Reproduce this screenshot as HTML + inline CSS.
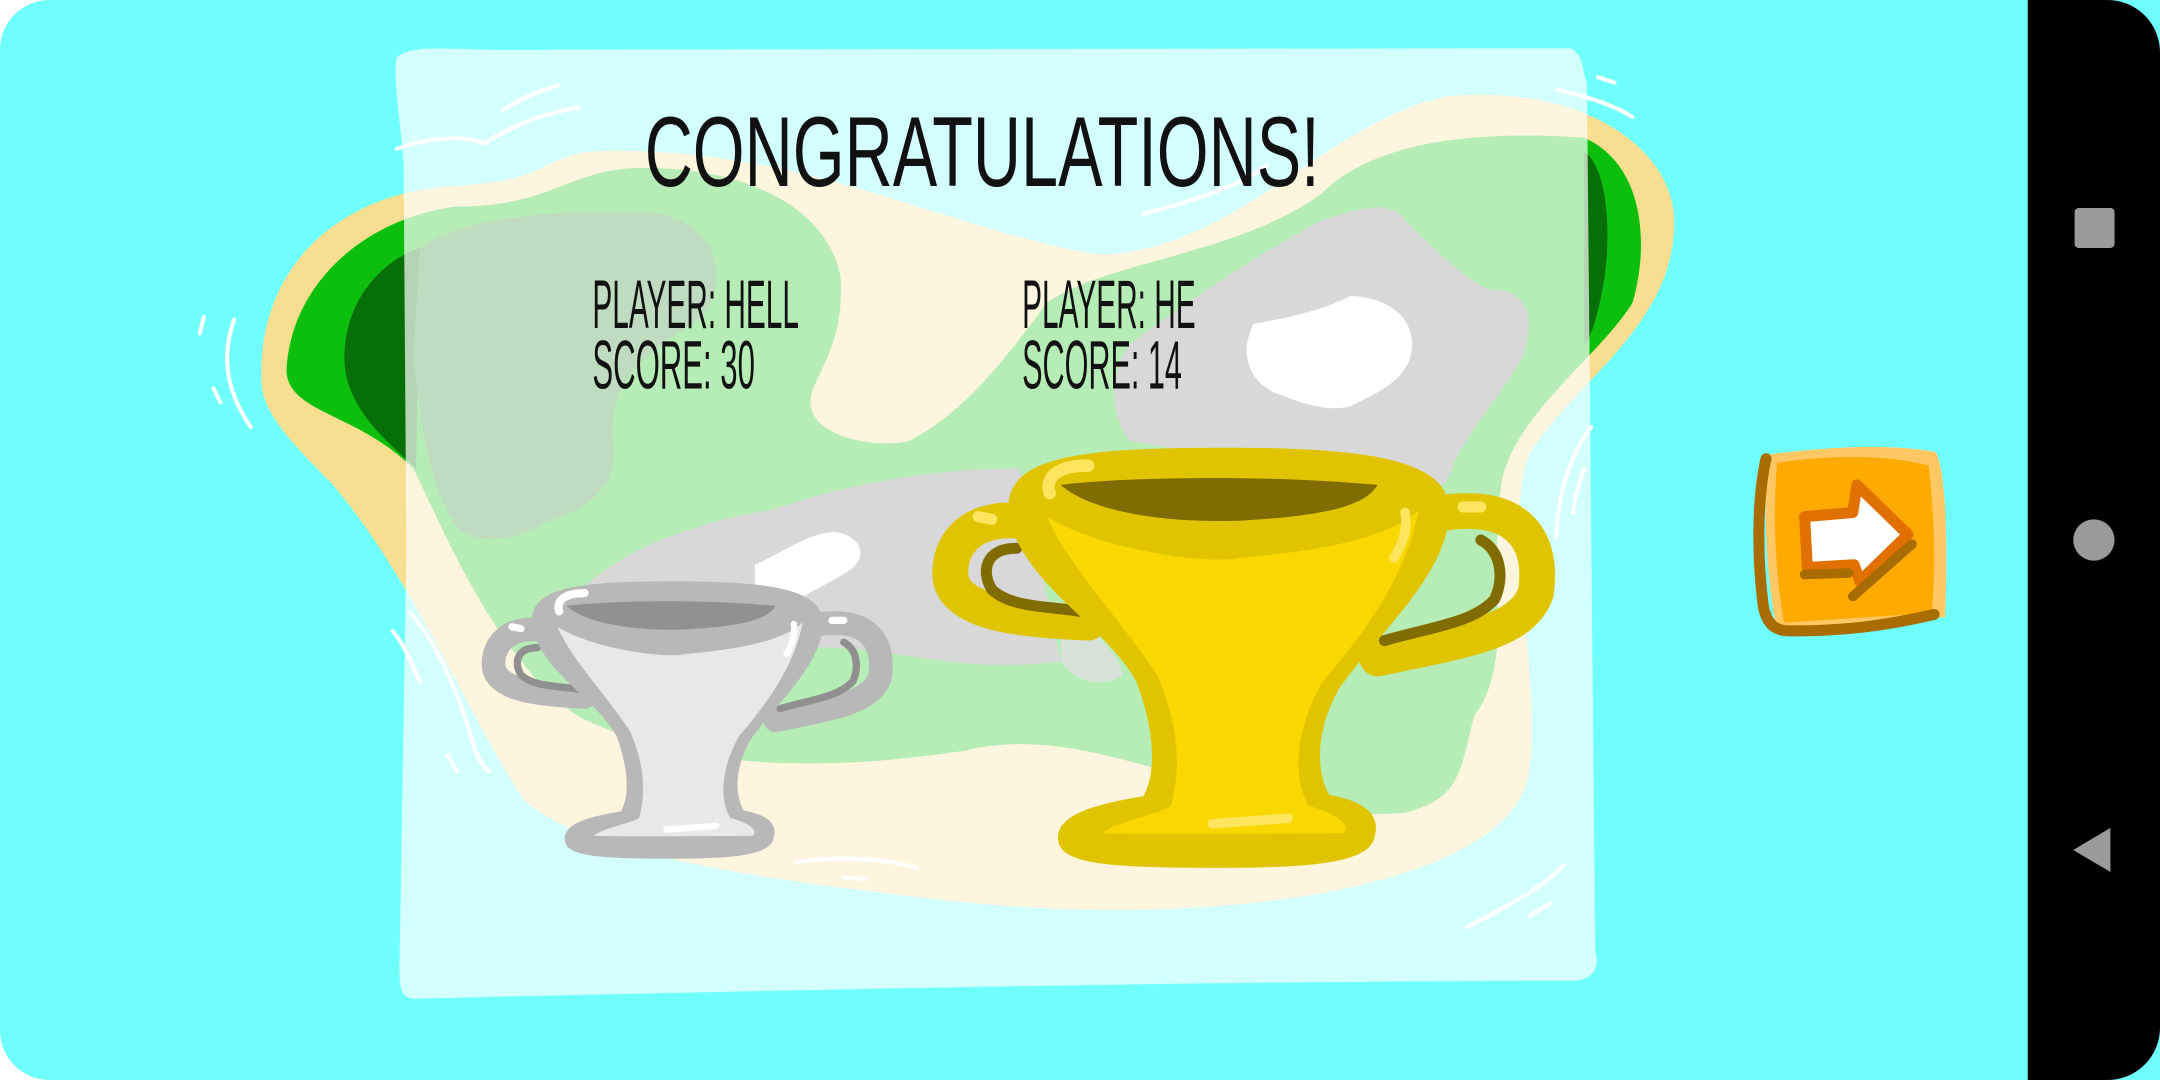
<!DOCTYPE html>
<html><head><meta charset="utf-8"><style>
html,body{margin:0;padding:0;background:#fff;width:2160px;height:1080px;overflow:hidden}
svg{display:block}
</style></head><body>
<svg width="2160" height="1080" viewBox="0 0 1568 784" xmlns="http://www.w3.org/2000/svg">
<path d="M36,0 H1568 V784 H36 A36,36 0 0 1 0,748 V36 A36,36 0 0 1 36,0Z" fill="#6ffffd"/>
<path d="M1472,0 H1530 A38,38 0 0 1 1568,38 V746 A38,38 0 0 1 1530,784 H1472Z" fill="#000"/>
<rect x="1506" y="151" width="29" height="29" rx="3" fill="#9a9a9a"/>
<circle cx="1520" cy="392" r="15" fill="#9a9a9a"/>
<path d="M1505,617 L1532,601 L1532,633Z" fill="#9a9a9a"/>

<!-- island -->
<path d="M190,280 C185,200 240,140 330,135 C420,130 380,105 470,110 C600,115 700,170 800,185 C900,180 960,90 1050,70 C1150,60 1222,110 1215,170 C1210,240 1140,280 1110,330 C1090,380 1120,500 1110,560 C1100,640 900,675 700,655 C560,640 420,620 380,580 C340,520 300,420 240,350 C210,320 192,300 190,280Z" fill="#f8de90"/>
<path d="M208,270 C210,210 260,160 330,150 C400,150 410,125 460,122 C540,120 600,150 610,200 C615,260 580,280 590,300 C600,320 640,325 660,320 C700,300 730,260 760,220 C800,190 900,185 960,140 C1000,100 1080,95 1150,100 C1195,120 1197,180 1185,220 C1160,260 1100,300 1090,350 C1080,420 1100,480 1070,520 C1060,560 1060,580 1020,590 C900,600 800,520 700,545 C600,560 500,560 420,520 C360,480 320,380 300,340 C260,300 210,300 208,270Z" fill="#0dbf0d"/>
<path d="M250,260 C250,220 275,190 305,180 L302,340 C280,320 250,295 250,260Z" fill="#076f07"/>
<path d="M1150,110 C1165,120 1170,160 1165,200 C1160,230 1155,245 1150,250Z" fill="#076f07"/>
<path d="M305,180 C330,160 400,150 480,155 C520,165 530,200 510,230 C480,250 440,270 445,320 C450,360 420,370 395,380 C370,395 340,395 330,380 C310,350 305,300 300,260Z" fill="#2d8a2d"/>
<path d="M420,430 C450,400 500,380 560,370 C620,350 680,340 740,340 L770,480 C700,490 650,470 600,470 C540,470 480,470 430,470Z" fill="#7d7d7d"/>
<path d="M820,250 C860,220 920,180 960,160 C990,150 1010,145 1020,160 C1040,180 1060,200 1080,210 C1110,210 1115,230 1105,260 C1080,300 1060,320 1050,350 L1000,380 C950,350 880,330 820,320 C805,300 805,270 820,250Z" fill="#7d7d7d"/>
<path d="M770,460 C790,450 810,470 815,490 C800,500 780,495 770,480Z" fill="#7d9a7d"/>

<!-- panel -->
<path d="M288,42 C300,30 330,38 400,36 L1140,35 C1150,40 1148,50 1152,60 L1158,690 C1162,705 1155,712 1140,712 C900,712 600,718 300,725 C290,724 290,715 290,700 L295,400 L293,120 C290,80 285,55 288,42Z" fill="#fff" fill-opacity="0.7"/>

<!-- clouds -->
<path d="M910,235 C940,230 960,225 980,215 C1000,215 1025,225 1025,250 C1025,275 1000,285 980,295 C960,300 940,290 925,285 C905,275 900,255 910,235Z" fill="#fff"/>
<path d="M548,410 C570,400 585,388 605,386 C625,388 632,405 615,415 C600,425 585,430 575,440 L548,425Z" fill="#fff"/>

<!-- scribbles -->
<g fill="none" stroke="#fff" stroke-width="3" stroke-linecap="round">
<path d="M365,80 C380,70 395,65 405,62"/><path d="M288,108 C310,100 335,98 352,104 C370,92 395,82 420,78"/>
<path d="M830,155 C860,148 900,135 920,120"/><path d="M1130,65 C1150,70 1170,75 1185,85"/><path d="M1160,56 L1172,60"/>
<path d="M148,230 L145,242"/><path d="M170,232 C160,260 165,285 182,310"/><path d="M155,282 L160,292"/>
<path d="M285,458 C295,470 300,485 305,495"/><path d="M298,445 C320,470 335,510 345,545 C348,552 352,558 355,560"/><path d="M325,548 L332,560"/>
<path d="M1155,310 C1140,330 1130,360 1130,390"/><path d="M1150,340 C1145,355 1142,365 1142,372"/>
<path d="M578,626 C600,622 640,622 665,630"/><path d="M612,637 L628,638"/>
<path d="M1065,673 C1090,660 1120,645 1135,628"/><path d="M1110,665 L1125,656"/>
</g>

<!-- silver trophy -->
<g transform="translate(-97,207.5) scale(0.66)">
  <path d="M740,378 C700,375 688,400 690,420 C695,445 740,450 790,452" fill="none" stroke="#b8b8b8" stroke-width="26" stroke-linecap="round"/>
  <path d="M738,398 C715,398 712,415 720,428 C735,442 765,440 785,444" fill="none" stroke="#909090" stroke-width="8" stroke-linecap="round"/>
  <path d="M1050,372 C1105,365 1120,395 1115,430 C1105,460 1060,465 1000,478" fill="none" stroke="#b8b8b8" stroke-width="26" stroke-linecap="round"/>
  <path d="M1075,392 C1090,400 1092,420 1085,435 C1070,452 1040,455 1005,465" fill="none" stroke="#909090" stroke-width="8" stroke-linecap="round"/>
  <path d="M732,368 C732,330 790,325 890,325 C1000,325 1056,335 1052,375 C1048,420 1000,460 972,500 C955,530 955,560 965,577 C992,582 1002,592 998,607 C995,627 950,630 885,630 C800,630 768,627 768,608 C768,590 800,583 830,578 C840,560 838,530 825,495 C800,450 735,420 732,368Z" fill="#b8b8b8"/>
  <path d="M760,375 C800,400 880,410 900,405 C960,400 1010,390 1030,370 C1020,420 990,460 960,495 C940,530 938,565 950,585 C975,592 980,600 975,605 C930,605 870,606 800,605 C810,596 840,592 850,585 C858,555 855,525 840,490 C810,445 775,410 760,375Z" fill="#e8e8e8"/>
  <path d="M770,352 C800,348 900,343 1000,352 C990,370 950,375 900,378 C840,380 790,370 770,352Z" fill="#919191"/>
  <g fill="none" stroke="#fff" stroke-linecap="round">
  <path d="M790,338 C770,338 758,345 762,358" stroke-width="9"/>
  <path d="M1020,372 C1022,385 1018,395 1012,405" stroke-width="7"/>
  <path d="M880,598 L935,594" stroke-width="7"/>
  <path d="M710,375 L720,377 M1062,368 L1075,368" stroke-width="8"/>
  </g>
</g>

<!-- gold trophy -->
<g>
  <path d="M740,378 C700,375 688,400 690,420 C695,445 740,450 790,452" fill="none" stroke="#e0c400" stroke-width="26" stroke-linecap="round"/>
  <path d="M738,398 C715,398 712,415 720,428 C735,442 765,440 785,444" fill="none" stroke="#806c00" stroke-width="8" stroke-linecap="round"/>
  <path d="M1050,372 C1105,365 1120,395 1115,430 C1105,460 1060,465 1000,478" fill="none" stroke="#e0c400" stroke-width="26" stroke-linecap="round"/>
  <path d="M1075,392 C1090,400 1092,420 1085,435 C1070,452 1040,455 1005,465" fill="none" stroke="#806c00" stroke-width="8" stroke-linecap="round"/>
  <path d="M732,368 C732,330 790,325 890,325 C1000,325 1056,335 1052,375 C1048,420 1000,460 972,500 C955,530 955,560 965,577 C992,582 1002,592 998,607 C995,627 950,630 885,630 C800,630 768,627 768,608 C768,590 800,583 830,578 C840,560 838,530 825,495 C800,450 735,420 732,368Z" fill="#e0c400"/>
  <path d="M760,375 C800,400 880,410 900,405 C960,400 1010,390 1030,370 C1020,420 990,460 960,495 C940,530 938,565 950,585 C975,592 980,600 975,605 C930,605 870,606 800,605 C810,596 840,592 850,585 C858,555 855,525 840,490 C810,445 775,410 760,375Z" fill="#f9d800"/>
  <path d="M770,352 C800,348 900,343 1000,352 C990,370 950,375 900,378 C840,380 790,370 770,352Z" fill="#806c00"/>
  <g fill="none" stroke="#fde55e" stroke-linecap="round">
  <path d="M790,338 C770,338 758,345 762,358" stroke-width="9"/>
  <path d="M1020,372 C1022,385 1018,395 1012,405" stroke-width="7"/>
  <path d="M880,598 L935,594" stroke-width="7"/>
  <path d="M710,375 L720,377 M1062,368 L1075,368" stroke-width="8"/>
  </g>
</g>

<!-- text -->
<g font-family="'Liberation Sans Narrow','Liberation Sans',sans-serif" fill="#111">
<text x="468" y="135" font-size="72" textLength="490" lengthAdjust="spacingAndGlyphs">CONGRATULATIONS!</text>
<text x="430" y="238" font-size="50" textLength="150" lengthAdjust="spacingAndGlyphs">PLAYER: HELL</text>
<text x="430" y="282" font-size="50" textLength="118" lengthAdjust="spacingAndGlyphs">SCORE: 30</text>
<text x="742" y="238" font-size="50" textLength="126" lengthAdjust="spacingAndGlyphs">PLAYER: HE</text>
<text x="742" y="282" font-size="50" textLength="116" lengthAdjust="spacingAndGlyphs">SCORE: 14</text>
</g>

<!-- next button -->
<path d="M1283,330 C1330,324 1370,322 1405,328 C1413,340 1414,400 1412,448 L1290,458 C1282,420 1280,370 1283,330Z" fill="#ffc864"/>
<path d="M1290,336 C1330,330 1370,330 1400,338 C1405,380 1405,420 1402,445 L1295,452 C1288,410 1287,370 1290,336Z" fill="#ffaa00"/>
<path d="M1282,333 C1276,360 1275,400 1280,440 C1283,455 1290,458 1300,458 C1340,458 1370,454 1404,446" fill="none" stroke="#a86c00" stroke-width="8" stroke-linecap="round"/>
<path d="M1310,375 L1345,372 L1348,352 L1385,388 L1350,422 L1346,410 L1312,412Z" fill="#fff" stroke="#e07000" stroke-width="8" stroke-linejoin="round"/>
<path d="M1345,433 L1388,395 M1310,417 L1342,416" fill="none" stroke="#a86c00" stroke-width="7" stroke-linecap="round"/>
</svg>
</body></html>
